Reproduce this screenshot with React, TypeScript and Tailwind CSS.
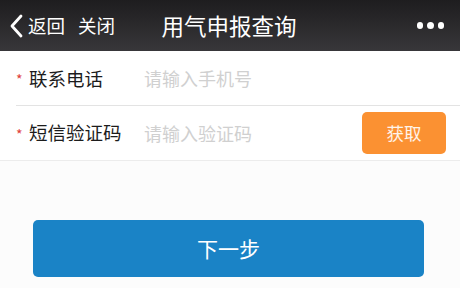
import React from 'react';

const font = { fontFamily: '"Noto Sans CJK SC", "Noto Sans", sans-serif' };

export default function App() {
  return (
    <div className="w-[460px] h-[288px] bg-[#fcfcfc] overflow-hidden flex flex-col" style={font}>
      {/* Header */}
      <div className="h-[51px] shrink-0 bg-gradient-to-b from-[#1e1d1f] to-[#38373a] flex items-center text-white relative">
        <div className="flex items-center pl-[9px]">
          <svg width="15" height="24" viewBox="0 0 15 24" className="mr-[4px]">
            <path d="M12 2 L3 12 L12 22" fill="none" stroke="#fff" strokeWidth="2.8" strokeLinecap="round" strokeLinejoin="round" />
          </svg>
          <span className="text-[18.5px] leading-none">返回</span>
          <span className="text-[18.5px] leading-none ml-[13px]">关闭</span>
        </div>
        <div className="absolute left-0 right-0 text-center text-[22.5px] leading-none pointer-events-none pr-[2px]">用气申报查询</div>
        <div className="ml-auto mr-[16px] flex gap-[4px]">
          <span className="w-[6.5px] h-[6.5px] rounded-full bg-white" />
          <span className="w-[6.5px] h-[6.5px] rounded-full bg-white" />
          <span className="w-[6.5px] h-[6.5px] rounded-full bg-white" />
        </div>
      </div>

      {/* Form */}
      <div className="bg-white border-b border-[#ececec]">
        <div className="h-[55px] flex items-center pl-[16px] relative">
          <span className="text-[#e0403a] text-[14px] w-[13px] mt-[2px]">*</span>
          <span className="text-[18.5px] text-[#1c1c1c] w-[117px]">联系电话</span>
          <span className="text-[18px] text-[#d0d0d0] -ml-[2px]">请输入手机号</span>
          <div className="absolute left-[16px] right-0 bottom-0 h-px bg-[#e3e3e3]" />
        </div>
        <div className="h-[54px] flex items-center pl-[16px] pr-[14px]">
          <span className="text-[#e0403a] text-[14px] w-[13px] mt-[2px]">*</span>
          <span className="text-[18.5px] text-[#1c1c1c] w-[117px]">短信验证码</span>
          <span className="text-[18px] text-[#d0d0d0] -ml-[2px]">请输入验证码</span>
          <button className="ml-auto w-[84px] h-[42px] rounded-[5px] bg-[#fb9132] text-white/90 text-[17.5px]">获取</button>
        </div>
      </div>

      <div className="pt-[59px] px-[33px] pr-[36px]">
        <button className="w-full h-[57px] rounded-[5px] bg-[#1a83c6] text-white text-[21px]">下一步</button>
      </div>
    </div>
  );
}
